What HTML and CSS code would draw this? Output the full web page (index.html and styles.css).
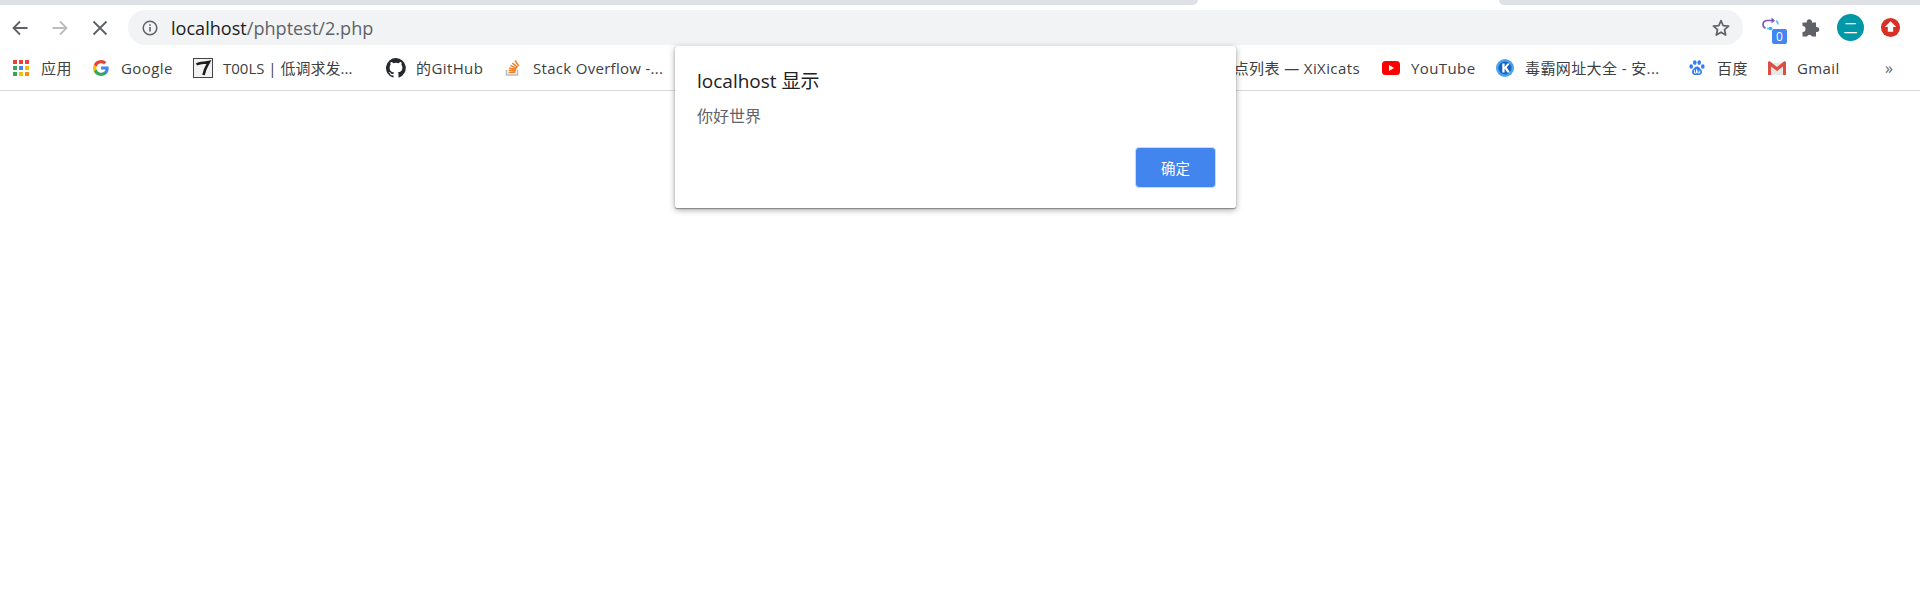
FILE: index.html
```html
<!DOCTYPE html>
<html lang="zh-CN">
<head>
<meta charset="utf-8">
<title>localhost/phptest/2.php</title>
<link rel="stylesheet" href="styles.css">
</head>
<body>
<header class="chrome">
  <div class="tabstrip">
    <div class="tab-rest tab-left"></div>
    <div class="tab-active"></div>
    <div class="tab-rest tab-right"></div>
  </div>
  <div class="toolbar">
    <svg class="nav back" viewBox="0 0 20 20"><path d="M17.500 10H3.500M10 3.500 3.500 10l6.500 6.500" fill="none" stroke="#5f6368" stroke-width="1.800"/></svg>
    <svg class="nav forward" viewBox="0 0 20 20"><path d="M2.500 10h14M10 3.500l6.500 6.500-6.500 6.500" fill="none" stroke="#babcbe" stroke-width="1.800"/></svg>
    <svg class="nav stop" viewBox="0 0 20 20"><path d="M3.500 3.500l13 13M16.500 3.500l-13 13" fill="none" stroke="#5f6368" stroke-width="1.900"/></svg>
    <div class="omnibox">
      <svg class="info" viewBox="0 0 16 16"><circle cx="8" cy="8" r="6.800" fill="none" stroke="#5f6368" stroke-width="1.500"/><path d="M7.200 7h1.600v4.500H7.200zM7.200 4.300h1.600v1.500H7.200z" fill="#5f6368"/></svg>
      <span class="url"><span class="host">localhost</span>/phptest/2.php</span>
      <svg class="star" viewBox="0 0 20 20"><path d="M10 2.600l2.200 5 5.400.5-4.100 3.600 1.200 5.300L10 14.200 5.300 17l1.200-5.300-4.100-3.600 5.400-.5z" fill="none" stroke="#5f6368" stroke-width="1.700" stroke-linejoin="round"/></svg>
    </div>
    <div class="extensions">
      <div class="ext ext-sync">
        <svg viewBox="0 0 20 20" class="sync-icon"><path d="M12.500 4.500H6A4 4 0 0 0 2 8.500a4 4 0 0 0 2.500 3.700" fill="none" stroke="#7e57c2" stroke-width="1.700"/><path d="M10.500 1.500l3.500 3-3.500 3z" fill="#7e57c2"/><path d="M15 4.800a4 4 0 0 1 2 3.700" fill="none" stroke="#4fc3f7" stroke-width="1.700"/><path d="M6 12.500h4" stroke="#4fc3f7" stroke-width="1.700"/><circle cx="9.500" cy="12.500" r="1.800" fill="#29b6f6"/></svg>
        <span class="badge">0</span>
      </div>
      <svg class="ext puzzle" viewBox="0 0 20 20"><path d="M1.500 8V4.500h4.300a2.600 2.600 0 1 1 5 0H15V9a2.600 2.600 0 1 1 0 5v4.500h-4a2.700 2.700 0 0 0-5 0H1.500V14a3 3 0 0 0 0-6z" fill="#5f6368"/></svg>
      <div class="avatar">二</div>
      <svg class="ext upload" viewBox="0 0 22 22"><circle cx="11" cy="11" r="10" fill="#d93025"/><path d="M11 4.500l6 6h-3.200v5H8.200v-5H5z" fill="#fff"/></svg>
    </div>
  </div>
  <nav class="bookmarks">
    <a class="bm bm-apps">
      <svg class="ico" viewBox="0 0 16 16"><g>
        <rect x="0" y="0" width="4" height="4" fill="#ea4335"/><rect x="6" y="0" width="4" height="4" fill="#ea4335"/><rect x="12" y="0" width="4" height="4" fill="#ea4335"/>
        <rect x="0" y="6" width="4" height="4" fill="#34a853"/><rect x="6" y="6" width="4" height="4" fill="#4285f4"/><rect x="12" y="6" width="4" height="4" fill="#fbbc05"/>
        <rect x="0" y="12" width="4" height="4" fill="#34a853"/><rect x="6" y="12" width="4" height="4" fill="#fbbc05"/><rect x="12" y="12" width="4" height="4" fill="#fb8c00"/></g></svg>
      应用</a>
    <a class="bm bm-google">
      <svg class="ico" viewBox="0 0 16 16"><path d="M15.700 8.200c0-.6 0-1.100-.1-1.600H8v3h4.400a3.700 3.700 0 0 1-1.600 2.500v2h2.600c1.500-1.400 2.300-3.400 2.300-5.900z" fill="#4285f4"/><path d="M8 16c2.200 0 4-.7 5.400-2l-2.600-2a4.800 4.800 0 0 1-7.200-2.500H.9v2.100A8 8 0 0 0 8 16z" fill="#34a853"/><path d="M3.600 9.500a4.800 4.800 0 0 1 0-3V4.400H.9a8 8 0 0 0 0 7.200z" fill="#fbbc05"/><path d="M8 3.200c1.200 0 2.300.4 3.100 1.200l2.300-2.300A8 8 0 0 0 .9 4.400l2.700 2.100A4.800 4.800 0 0 1 8 3.200z" fill="#ea4335"/></svg>
      Google</a>
    <a class="bm bm-tools">
      <svg class="ico ico-wide" viewBox="0 0 20 20"><rect x=".5" y=".5" width="19" height="19" fill="#f2f2f2" stroke="#444"/><path d="M3.500 6.500C6 4.500 12 5 16 4c-1.500 3-4.500 7-5.500 13" fill="none" stroke="#1c1c1c" stroke-width="2.600"/></svg>
      T00LS | 低调求发...</a>
    <a class="bm bm-github">
      <svg class="ico ico-wide" viewBox="0 0 16 16"><path d="M8 0a8 8 0 0 0-2.500 15.600c.4.100.5-.2.500-.4v-1.400c-2.200.5-2.700-1-2.700-1-.4-.9-.9-1.200-.9-1.200-.7-.5.100-.5.100-.5.800.1 1.200.8 1.200.8.700 1.200 1.900.9 2.300.7.100-.5.300-.9.500-1.100-1.800-.2-3.600-.9-3.600-4 0-.9.300-1.600.8-2.100-.1-.2-.4-1 .1-2.100 0 0 .7-.2 2.200.8a7.600 7.600 0 0 1 4 0c1.500-1 2.200-.8 2.200-.8.400 1.100.2 1.900.1 2.100.5.600.8 1.300.8 2.100 0 3.100-1.900 3.700-3.700 3.900.3.300.6.800.6 1.500v2.200c0 .2.100.5.600.4A8 8 0 0 0 8 0z" fill="#24292e"/></svg>
      的GitHub</a>
    <a class="bm bm-so">
      <svg class="ico" viewBox="0 0 16 16"><path d="M1.500 10v5h11v-5" fill="none" stroke="#bcbbbb" stroke-width="1.500"/><path d="M3.500 12.500h7M3.700 10.300l7 .6M4.200 8l6.900 1.600M5.400 5.400l6.300 3M7.300 3l5.300 4.400M10 .5l3.800 5.600" stroke="#f48024" stroke-width="1.600" fill="none"/></svg>
      Stack Overflow -...</a>
    <a class="bm bm-hidden">区块链节点列表 — XiXicats</a>
    <a class="bm bm-yt">
      <svg class="ico ico-yt" viewBox="0 0 18 14"><rect width="18" height="14" rx="3.500" fill="#f00"/><path d="M7 4l5 3-5 3z" fill="#fff"/></svg>
      YouTube</a>
    <a class="bm bm-k">
      <svg class="ico ico-k" viewBox="0 0 18 18"><circle cx="9" cy="9" r="9" fill="#4aa3ec"/><circle cx="9" cy="9" r="6.500" fill="#1565c0"/><path d="M6.300 4.500h2.300v3.500l2.700-3.500h2.600L10.700 8.500l3.400 5h-2.800L8.600 9.500v4H6.300z" fill="#fff"/></svg>
      毒霸网址大全 - 安...</a>
    <a class="bm bm-du">
      <svg class="ico" viewBox="0 0 16 16"><g fill="#2e7cf6"><ellipse cx="2.200" cy="6.500" rx="1.800" ry="2.300"/><ellipse cx="5.800" cy="2.600" rx="1.800" ry="2.300"/><ellipse cx="10.200" cy="2.600" rx="1.800" ry="2.300"/><ellipse cx="13.800" cy="6.500" rx="1.800" ry="2.300"/><path d="M8 6.500c-2 0-2.700 1.900-4 3-1.500 1.300-1.500 5.500 2 5.500h4c3.500 0 3.500-4.200 2-5.500-1.300-1.100-2-3-4-3z"/></g><path d="M5.500 10v3h2v-4M8.800 10.500V13h2v-2.500" fill="none" stroke="#fff" stroke-width=".9"/></svg>
      百度</a>
    <a class="bm bm-gmail">
      <svg class="ico ico-gm" viewBox="0 0 20 16"><path d="M2 3h16v12H2z" fill="#e8e8e8"/><path d="M1 2v13h3V6.500L10 11l6-4.500V15h3V2l-1.500-1L10 7 2.500 1z" fill="#dc4e41"/></svg>
      Gmail</a>
    <span class="more">»</span>
  </nav>
</header>
<main class="page"></main>
<section class="dialog">
  <h1 class="dialog-title">localhost 显示</h1>
  <p class="dialog-msg">你好世界</p>
  <div class="dialog-actions"><button class="dialog-ok">确定</button></div>
</section>
</body>
</html>
```
FILE: styles.css
```css
* { box-sizing: border-box; }
html, body { margin: 0; height: 100%; background: #fff; overflow: hidden; }
body { font-family: "Open Sans", "Noto Sans CJK SC", sans-serif; color: #3c4043; }

.chrome { display: flex; flex-direction: column; }
.tabstrip { display: flex; height: 5px; }
.tab-rest { background: #dee1e6; height: 5px; }
.tab-left { width: 1198px; border-bottom-right-radius: 8px; }
.tab-active { width: 301px; background: #fff; }
.tab-right { flex: 1; border-bottom-left-radius: 8px; }

.toolbar { display: flex; align-items: center; height: 40px; padding: 5px 0 0 10px; }
.nav { width: 20px; height: 20px; flex: none; margin-right: 20px; }
.stop { margin-right: 18px; }
.omnibox { width: 1615px; height: 35px; border-radius: 18px; background: #f1f3f4; display: flex; align-items: center; padding-left: 14px; padding-right: 12px; }
.info { width: 16px; height: 16px; flex: none; margin-right: 13px; }
.url { flex: 1; font-size: 18.100px; color: #5f6368; white-space: nowrap; }
.host { color: #202124; }
.star { width: 20px; height: 20px; flex: none; }
.extensions { display: flex; align-items: center; flex: 1; position: relative; height: 35px; padding-left: 18px; }
.ext-sync { position: relative; width: 24px; height: 24px; margin-right: 16px; }
.sync-icon { width: 20px; height: 20px; display: block; }
.badge { position: absolute; left: 11px; top: 13px; width: 15px; height: 15px; border-radius: 2px; background: #4285f4; color: #fff; font-size: 12px; line-height: 15px; text-align: center; }
.ext { flex: none; }
.puzzle { width: 20px; height: 20px; margin-right: 16px; }
.avatar { width: 27px; height: 27px; border-radius: 50%; background: #0097a7; color: #fff; font-size: 14px; line-height: 27px; text-align: center; flex: none; margin-right: 16px; }
.upload { width: 21px; height: 21px; }

.bookmarks { display: flex; align-items: center; height: 46px; border-bottom: 1px solid #dadce0; font-size: 15px; letter-spacing: .4px; white-space: nowrap; padding-left: 13px; position: relative; }
.bm { display: flex; align-items: center; flex: none; color: #3c4043; }
.ico { width: 16px; height: 16px; flex: none; margin-right: 12px; }
.ico-wide { width: 20px; height: 20px; margin-right: 10px; }
.ico-yt { width: 18px; height: 14px; margin-right: 11px; }
.ico-k { width: 18px; height: 18px; margin-right: 11px; }
.ico-gm { width: 20px; height: 16px; margin-right: 10px; }
.bm-apps { width: 80px; }
.bm-google { width: 100px; }
.bm-tools { width: 193px; letter-spacing: 0; }
.bm-github { width: 119px; }
.bm-so { width: 678px; letter-spacing: .3px; }
.bm-hidden { width: 177px; justify-content: flex-end; }
.bm-yt { width: 114px; margin-left: 22px; }
.bm-k { width: 193px; }
.bm-du { width: 78px; }
.bm-gmail { width: 118px; }
.more { font-size: 16px; color: #5f6368; }

.page { flex: 1; }

.dialog { position: absolute; left: 675px; top: 46px; width: 561px; height: 162px; background: #fff; border-radius: 2px; box-shadow: 0 1px 1px rgba(0,0,0,.3), 0 2px 6px rgba(0,0,0,.35), 0 0 1px rgba(0,0,0,.3); padding: 23px 20px 20px 22px; display: flex; flex-direction: column; }
.dialog-title { margin: 0; font-size: 19px; font-weight: 400; line-height: 24px; color: #202124; }
.dialog-msg { margin: 13px 0 0; font-size: 16px; line-height: 20px; color: #5f6368; }
.dialog-actions { margin-top: auto; display: flex; justify-content: flex-end; }
.dialog-ok { width: 81px; height: 41px; border: 1px solid #c6dafc; border-radius: 4px; background: #4285ee; color: #fff; font: 14.500px "Noto Sans CJK SC", sans-serif; }
```
